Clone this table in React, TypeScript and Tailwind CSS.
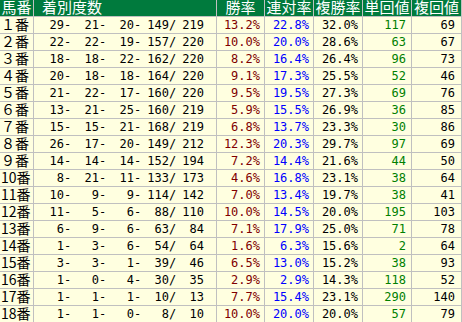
const rows: [string, number[], string, string, string, number, number][] = [
  ["１番", [29, 21, 20, 149, 219], "13.2%", "22.8%", "32.0%", 117, 69],
  ["２番", [22, 22, 19, 157, 220], "10.0%", "20.0%", "28.6%", 63, 67],
  ["３番", [18, 18, 22, 162, 220], "8.2%", "16.4%", "26.4%", 96, 73],
  ["４番", [20, 18, 18, 164, 220], "9.1%", "17.3%", "25.5%", 52, 46],
  ["５番", [21, 22, 17, 160, 220], "9.5%", "19.5%", "27.3%", 69, 76],
  ["６番", [13, 21, 25, 160, 219], "5.9%", "15.5%", "26.9%", 36, 85],
  ["７番", [15, 15, 21, 168, 219], "6.8%", "13.7%", "23.3%", 30, 86],
  ["８番", [26, 17, 20, 149, 212], "12.3%", "20.3%", "29.7%", 97, 69],
  ["９番", [14, 14, 14, 152, 194], "7.2%", "14.4%", "21.6%", 44, 50],
  ["10番", [8, 21, 11, 133, 173], "4.6%", "16.8%", "23.1%", 38, 64],
  ["11番", [10, 9, 9, 114, 142], "7.0%", "13.4%", "19.7%", 38, 41],
  ["12番", [11, 5, 6, 88, 110], "10.0%", "14.5%", "20.0%", 195, 103],
  ["13番", [6, 9, 6, 63, 84], "7.1%", "17.9%", "25.0%", 71, 78],
  ["14番", [1, 3, 6, 54, 64], "1.6%", "6.3%", "15.6%", 2, 64],
  ["15番", [3, 3, 1, 39, 46], "6.5%", "13.0%", "15.2%", 38, 93],
  ["16番", [1, 0, 4, 30, 35], "2.9%", "2.9%", "14.3%", 118, 52],
  ["17番", [1, 1, 1, 10, 13], "7.7%", "15.4%", "23.1%", 290, 140],
  ["18番", [1, 1, 0, 8, 10], "10.0%", "20.0%", "20.0%", 57, 79],
];

const jp = "font-['Noto_Sans_CJK_JP',sans-serif]";
const mono = "font-['DejaVu_Sans_Mono',monospace] text-[12px]";
const cell = "h-full flex items-center border-r border-[#c0c0c0]";

function Counts({ values }: { values: number[] }) {
  return (
    <div className={`${mono} flex text-black`}>
      {values.map((v, i) => (
        <div key={i} className="flex">
          <span className="w-[28px] text-right">{v}</span>
          {i < 4 ? <span className="w-[7px]">{i === 3 ? "/" : "-"}</span> : null}
        </div>
      ))}
    </div>
  );
}

export default function App() {
  const headers = ["勝率", "連対率", "複勝率", "単回値", "複回値"];
  const widths = ["w-[48px]", "w-[49px]", "w-[49px]", "w-[49px]", "w-[50px]"];

  return (
    <div className="w-[462px] h-[322px] overflow-hidden bg-[#ffffe0]">
      <div className={`${jp} flex h-[17px] border-b border-[#c0c0c0] bg-[#007a3d] text-[15px] leading-[16px] text-white`}>
        <div className={`${cell} w-[34px] justify-center`}>
          <span className="-translate-y-px">馬番</span>
        </div>
        <div className={`${cell} w-[183px] pl-[8px]`}>
          <span className="-translate-y-px">着別度数</span>
        </div>
        {headers.map((h, i) => (
          <div key={h} className={`${cell} ${widths[i]} justify-center`}>
            <span className="-translate-y-px">{h}</span>
          </div>
        ))}
      </div>
      {rows.map(([label, counts, win, rentai, fuku, tan, fukuKai]) => (
        <div key={label} className="flex h-[17px] border-b border-[#c0c0c0] leading-[16px]">
          <div className={`${cell} ${jp} w-[34px] pl-[1px] text-[14px] text-black`}>
            <span className="-translate-y-px">{label}</span>
          </div>
          <div className={`${cell} w-[183px] pl-[2px]`}>
            <Counts values={counts} />
          </div>
          <div className={`${cell} ${mono} w-[48px] justify-end pr-[4px] text-[#800000]`}>{win}</div>
          <div className={`${cell} ${mono} w-[49px] justify-end pr-[4px] text-[#0000ff]`}>{rentai}</div>
          <div className={`${cell} ${mono} w-[49px] justify-end pr-[4px] text-black`}>{fuku}</div>
          <div className={`${cell} ${mono} w-[49px] justify-end pr-[5px] text-[#008000]`}>{tan}</div>
          <div className={`${cell} ${mono} w-[50px] justify-end pr-[6px] text-black`}>{fukuKai}</div>
        </div>
      ))}
    </div>
  );
}
